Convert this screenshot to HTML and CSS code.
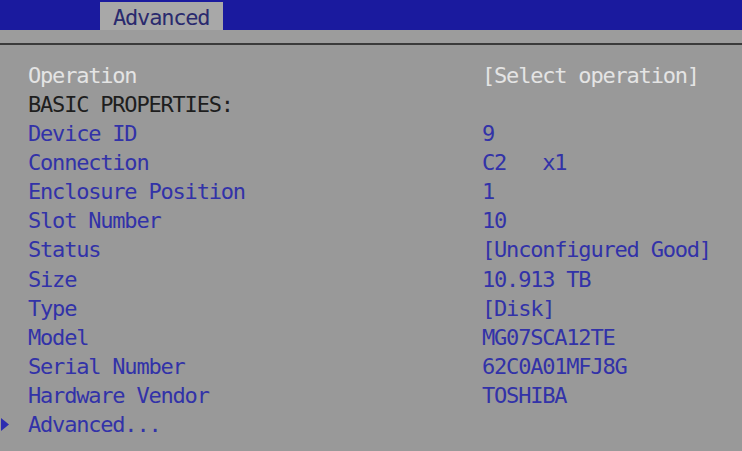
FILE: index.html
```html
<!DOCTYPE html>
<html>
<head>
<meta charset="utf-8">
<link rel="stylesheet" href="styles.css">
</head>
<body>
<div class="topbar">
  <div class="tab">Advanced</div>
</div>
<div class="band"></div>
<div class="content">
  <div class="row"><span class="mark"></span><span class="label white">Operation</span><span class="value white">[Select operation]</span></div>
  <div class="row"><span class="mark"></span><span class="label dark">BASIC PROPERTIES:</span><span class="value"></span></div>
  <div class="row"><span class="mark"></span><span class="label">Device ID</span><span class="value">9</span></div>
  <div class="row"><span class="mark"></span><span class="label">Connection</span><span class="value">C2   x1</span></div>
  <div class="row"><span class="mark"></span><span class="label">Enclosure Position</span><span class="value">1</span></div>
  <div class="row"><span class="mark"></span><span class="label">Slot Number</span><span class="value">10</span></div>
  <div class="row"><span class="mark"></span><span class="label">Status</span><span class="value">[Unconfigured Good]</span></div>
  <div class="row"><span class="mark"></span><span class="label">Size</span><span class="value">10.913 TB</span></div>
  <div class="row"><span class="mark"></span><span class="label">Type</span><span class="value">[Disk]</span></div>
  <div class="row"><span class="mark"></span><span class="label">Model</span><span class="value">MG07SCA12TE</span></div>
  <div class="row"><span class="mark"></span><span class="label">Serial Number</span><span class="value">62C0A01MFJ8G</span></div>
  <div class="row"><span class="mark"></span><span class="label">Hardware Vendor</span><span class="value">TOSHIBA</span></div>
  <div class="row"><span class="mark"><svg class="arrow" width="8" height="13" viewBox="0 0 8 13"><polygon points="0,0 8,6.5 0,13" fill="#2c2cb0"/></svg></span><span class="label">Advanced...</span><span class="value"></span></div>
</div>
</body>
</html>
```
FILE: styles.css
```css
html, body {
  margin: 0;
  padding: 0;
  background: #999999;
  width: 742px;
  height: 451px;
  overflow: hidden;
  font-family: "DejaVu Sans Mono", "Liberation Mono", monospace;
  font-size: 22px;
  letter-spacing: -1.2px;
}
.topbar {
  height: 30px;
  background: #1a1a9e;
  padding-left: 100px;
  display: flex;
  align-items: flex-end;
}
.tab {
  width: 123px;
  height: 28px;
  background: #a8a8a8;
  color: #2a2a6e;
  box-sizing: border-box;
  padding-left: 13px;
  line-height: 31px;
}
.band {
  height: 13px;
  background: #9c9c9c;
  border-bottom: 2px solid #3a3a3a;
}
.content {
  padding-top: 16px;
}
.row {
  display: grid;
  grid-template-columns: 28px 454px 1fr;
  height: 29.08px;
  line-height: 29.08px;
  white-space: pre;
  color: #3232a8;
}
.mark {
  display: flex;
  align-items: center;
  padding-left: 1px;
}
.white { color: #e4e4e4; }
.dark { color: #1e1e1e; }
```
